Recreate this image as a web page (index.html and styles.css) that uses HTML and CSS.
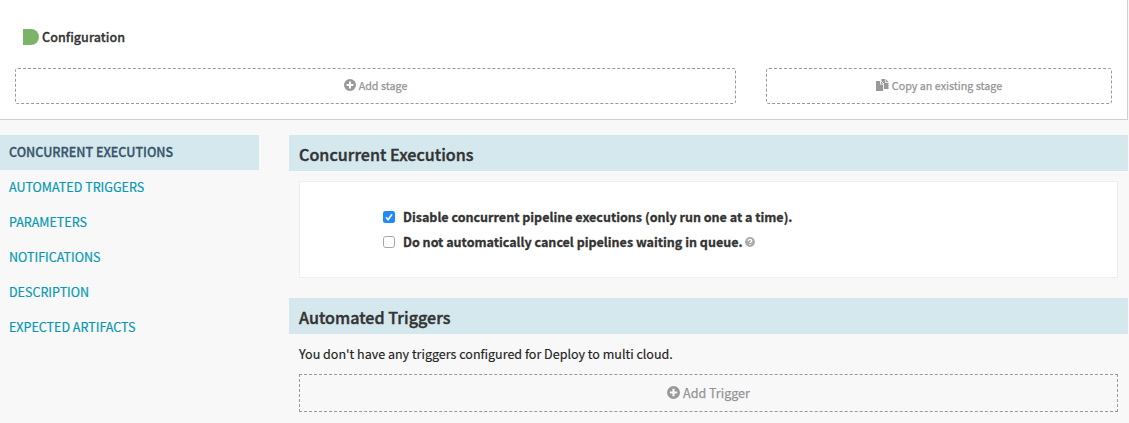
FILE: index.html
```html
<!DOCTYPE html>
<html lang="en">
<head>
<meta charset="utf-8">
<title>Pipeline configuration</title>
<link rel="stylesheet" href="styles.css">
</head>
<body>
<svg class="symbols" aria-hidden="true">
  <symbol id="plus" viewBox="0 0 12 12"><path fill-rule="evenodd" d="M6 0a6 6 0 1 1 0 12A6 6 0 0 1 6 0ZM5 2.6V5H2.6v2H5v2.4h2V7h2.4V5H7V2.6Z"/></symbol>
  <symbol id="copy" viewBox="0 0 13 12"><path d="M0 2h4v3.500h3.200V12H0ZM4.700 2.200 7.200 4.800H4.700ZM5.300 0H9v3.700h3.500V10H8V4.500L5.300 1.700ZM9.700 0l2.800 3H9.700Z"/></symbol>
  <symbol id="help" viewBox="0 0 10 10"><circle cx="5" cy="5" r="4.900"/><path d="M3.300 4C3.300 1.800 6.700 1.900 6.700 3.900 6.700 5 5 4.900 5 6.100M5 6.900v1.200" fill="none" stroke="#fff" stroke-width="1.300"/></symbol>
</svg>
<header class="graph">
  <div class="stage"><i class="marker"></i><span class="stage-name">Configuration</span></div>
  <div class="actions">
    <button class="dashed add-stage"><svg class="icon"><use href="#plus"/></svg><span>Add stage</span></button>
    <button class="dashed copy-stage"><svg class="icon copy"><use href="#copy"/></svg><span>Copy an existing stage</span></button>
  </div>
</header>
<main class="body">
  <nav class="nav">
    <a class="item active"><span>CONCURRENT EXECUTIONS</span></a>
    <a class="item"><span>AUTOMATED TRIGGERS</span></a>
    <a class="item"><span>PARAMETERS</span></a>
    <a class="item"><span>NOTIFICATIONS</span></a>
    <a class="item"><span>DESCRIPTION</span></a>
    <a class="item"><span>EXPECTED ARTIFACTS</span></a>
  </nav>
  <div class="content">
    <section class="section">
      <h4 class="heading">Concurrent Executions</h4>
      <div class="panel">
        <label class="option"><svg class="check" viewBox="0 0 12 12"><rect width="12" height="12" rx="2.500" fill="#2189fb"/><path d="M3 6.300 5.100 8.700 9 3.200" fill="none" stroke="#fff" stroke-width="1.600"/></svg><span>Disable concurrent pipeline executions (only run one at a time).</span></label>
        <label class="option"><svg class="check" viewBox="0 0 12 12"><rect x=".5" y=".5" width="11" height="11" rx="2.200" fill="#fff" stroke="#a6a6a6"/></svg><span>Do not automatically cancel pipelines waiting in queue.</span><svg class="help"><use href="#help"/></svg></label>
      </div>
    </section>
    <section class="section">
      <h4 class="heading triggers">Automated Triggers</h4>
      <p class="empty">You don't have any triggers configured for Deploy to multi cloud.</p>
      <button class="dashed add-trigger"><svg class="icon large"><use href="#plus"/></svg><span>Add Trigger</span></button>
    </section>
  </div>
</main>
</body>
</html>
```
FILE: styles.css
```css
* { box-sizing: border-box; }
body { margin: 0; height: 423px; overflow: hidden; background: #f8f8f8; color: #333; font: 12.530px/20px "Noto Sans CJK SC", sans-serif; }
.symbols { position: absolute; width: 0; height: 0; }
svg { flex: none; }
.graph { width: 1128px; height: 120px; padding: 27px 15px 0; background: #fff; border: solid #d0d0d0; border-width: 0 1px 1px 0; }
.stage { display: flex; align-items: center; height: 20px; padding-left: 8px; gap: 3px; }
.marker { width: 16px; height: 16px; background: #7bb469; border-radius: 0 8px 8px 0; }
.stage-name { font-weight: 500; -webkit-text-stroke: .3px; letter-spacing: .06px; }
.actions { display: flex; gap: 30px; margin-top: 21px; }
.dashed { display: flex; align-items: center; justify-content: center; gap: 3px; padding: 0; border: 1px dashed #999; border-radius: 3px; background: transparent; color: #959595; font: inherit; -webkit-text-stroke: .25px; }
.add-stage { width: 721px; height: 36px; font-size: 10.740px; }
.copy-stage { width: 346px; height: 36px; font-size: 10.740px; }
.icon { width: 12px; height: 12px; fill: #999; margin-top: -2px; stroke: none; }
.icon.copy { width: 13px; }
.icon.large { width: 13px; height: 13px; }
.body { display: flex; gap: 30px; padding-top: 15px; }
.nav { width: 259px; }
.item { display: flex; align-items: center; height: 35px; padding: 0 0 2px 9px; color: #0798b4; -webkit-text-stroke: .2px; }
.item.active { background: #d4e8ed; color: #38546c; font-weight: 500; -webkit-text-stroke: .3px; letter-spacing: 0; }
.content { width: 839px; }
.heading { display: flex; align-items: center; height: 36px; margin: 0; padding: 1px 10px 0 10px; background: #d4e8ed; font-size: 16.100px; font-weight: 500; -webkit-text-stroke: .4px; letter-spacing: .03px; }
.panel { height: 97px; margin: 10px 10px 20px; padding: 22px 83px 0; background: #fff; border: 1px solid #eee; }
.option { display: flex; align-items: center; height: 25px; font-weight: 700; -webkit-text-stroke: .3px; }
.check { width: 12px; height: 12px; margin-right: 8px; }
.help { width: 10px; height: 10px; margin-left: 3px; fill: #aaa; }
.empty { margin: 10px 10px; color: #222; -webkit-text-stroke: .15px; }
.add-trigger { width: 819px; height: 38px; margin-left: 10px; border-radius: 0; }
```
